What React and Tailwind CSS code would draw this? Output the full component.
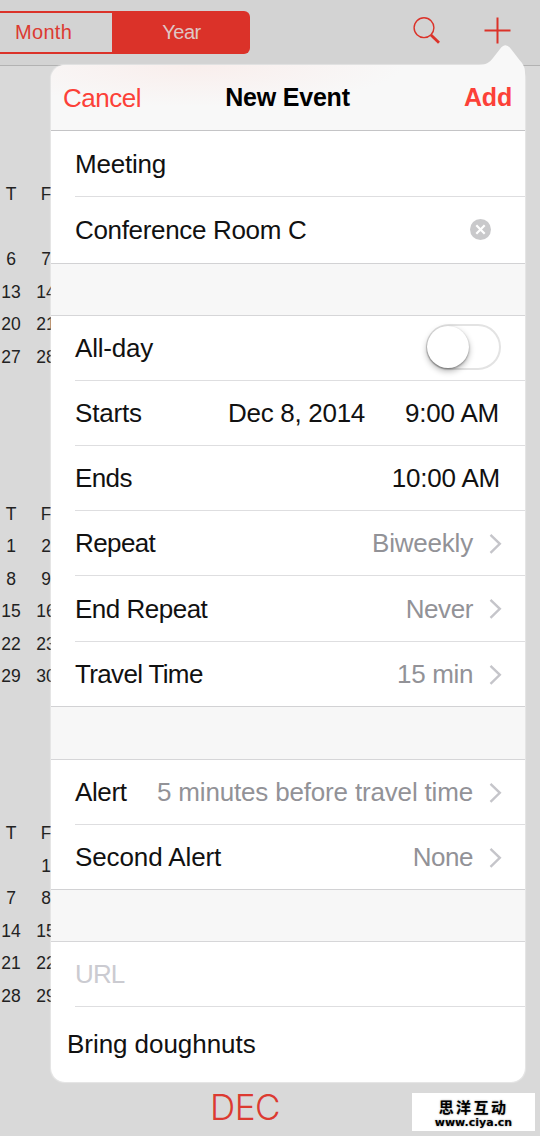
import React from "react";

const months = [
  ["T", "F", "", "", "6", "7", "13", "14", "20", "21", "27", "28"],
  ["T", "F", "1", "2", "8", "9", "15", "16", "22", "23", "29", "30"],
  ["T", "F", "", "1", "7", "8", "14", "15", "21", "22", "28", "29"],
];

const Chevron = () => (
  <svg width="13" height="22" viewBox="0 0 13 22" fill="none" className="ml-4 shrink-0">
    <path d="M1.5 1.8 L10.8 10.8 L1.5 19.8" stroke="#c5c5ca" strokeWidth="2.4" />
  </svg>
);

const Row = ({ label, height = "h-[65px]", tracking = "", last = false, children }) => (
  <div className={`bg-white pl-6 ${height} ${last ? "border-b border-[#d2d2d4]" : ""}`}>
    <div
      className={`flex h-full items-center justify-between pr-[23px] pt-px ${
        last ? "" : "border-b border-[#dedee0]"
      }`}
    >
      <span className={`whitespace-nowrap ${tracking}`}>{label}</span>
      {children}
    </div>
  </div>
);

const LinkValue = ({ children, tracking = "" }) => (
  <div className="flex items-center text-[#929297]">
    <span className={`whitespace-nowrap ${tracking}`}>{children}</span>
    <Chevron />
  </div>
);

const Gap = ({ height = "h-[52px]" }) => (
  <div className={`${height} border-b border-[#d6d6d8] bg-[#f7f7f7]`} />
);

const TopBar = () => (
  <header className="flex h-[66px] items-start justify-between border-b border-[#b2b2b2] bg-[#d3d3d3]">
    <div className="mt-[11px] flex h-[43px] w-[250px] overflow-hidden rounded-r-md border-2 border-l-0 border-[#db3229] bg-[#db3229] text-[20px] leading-[39px]">
      <div className="w-[112px] bg-[#d3d3d3] pl-[15px] tracking-[0.3px] text-[#dc3a31]">Month</div>
      <div className="flex-1 pl-[3px] text-center tracking-[-0.5px] text-[#dfc6c5]">Year</div>
    </div>
    <div className="mr-7 mt-[16px] flex gap-[43px]">
      <svg width="30" height="30" viewBox="0 0 30 30" fill="none" stroke="#db3229">
        <circle cx="13" cy="11.7" r="9.9" strokeWidth="1.4" />
        <path d="M20 19 L28 26.7" strokeWidth="2.8" />
      </svg>
      <svg width="28" height="30" viewBox="0 0 28 30" fill="none" stroke="#db3229">
        <path d="M0.5 14.5 H26.5 M13.5 1.5 V27.5" strokeWidth="2" />
      </svg>
    </div>
  </header>
);

const YearGrid = () => (
  <div className="-ml-[6.5px] w-[70px] pt-[112px]">
    {months.map((cells, i) => (
      <div key={i} className="h-[319.5px]">
        <div className="grid grid-cols-2 text-center text-[17.5px] leading-[32.6px] text-[#222]">
          {cells.map((c, j) => (
            <span key={j} className="h-[32.6px]">
              {c}
            </span>
          ))}
        </div>
      </div>
    ))}
  </div>
);

const EventPopover = () => (
  <div className="absolute left-[51px] top-[65px] w-[474px]">
    <svg
      width="50"
      height="36"
      viewBox="0 0 50 36"
      className="absolute -top-5 right-0"
      fill="#f8f8f8"
    >
      <path d="M4 20 C11 19.5 14 18 18 13 L25 4 Q30.5 -3.5 36 4 L44.5 15 C48 19 50 22 50 27 V36 H4 Z" />
    </svg>
    <div className="overflow-hidden rounded-[14px] text-[26px] tracking-[-0.2px] text-[#111] shadow-[0_0_1px_0.5px_rgba(255,255,255,0.35)]">
      <div className="grid h-[66px] grid-cols-[1fr_auto_1fr] items-center border-b border-[#c4c4c6] bg-[#f8f8f8] bg-[radial-gradient(ellipse_at_30%_0%,#f9eeec_0%,#f8f8f8_45%)] pl-3 pr-[13px] pt-px text-[#fc4138]">
        <span className="tracking-[-0.5px]">Cancel</span>
        <span className="text-[25px] font-bold text-black">New Event</span>
        <span className="text-right text-[25px] font-bold">Add</span>
      </div>

      <Row label="Meeting" height="h-[66px]" />
      <Row label="Conference Room C" tracking="tracking-[-0.33px]" height="h-[67px]" last>
        <svg width="21" height="21" viewBox="0 0 21 21" className="mb-0.5 mr-[11px]">
          <circle cx="10.5" cy="10.5" r="10.5" fill="#c9c9cb" />
          <path d="M6.3 6.3 L14.7 14.7 M14.7 6.3 L6.3 14.7" stroke="#fff" strokeWidth="2.2" />
        </svg>
      </Row>
      <Gap />

      <Row label="All-day">
        <div className="mb-[3px] mr-px h-[46px] w-[75px] rounded-full border-2 border-[#e3e3e3] bg-white">
          <div className="-ml-px h-[42px] w-[42px] rounded-full bg-white shadow-[0_3px_6px_rgba(0,0,0,0.3),0_1px_2px_rgba(0,0,0,0.35)]" />
        </div>
      </Row>
      <Row label="Starts">
        <div className="flex gap-10 whitespace-nowrap pr-[3px]">
          <span className="tracking-[-0.3px]">Dec 8, 2014</span>
          <span>9:00 AM</span>
        </div>
      </Row>
      <Row label="Ends" tracking="tracking-[-0.6px]">
        <span className="pr-0.5">10:00 AM</span>
      </Row>
      <Row label="Repeat" tracking="tracking-[-0.6px]">
        <LinkValue>Biweekly</LinkValue>
      </Row>
      <Row label="End Repeat" tracking="tracking-[-0.5px]" height="h-[66px]">
        <LinkValue tracking="tracking-[-0.4px]">Never</LinkValue>
      </Row>
      <Row label="Travel Time" tracking="tracking-[-0.65px]" last>
        <LinkValue tracking="tracking-[-0.35px]">15 min</LinkValue>
      </Row>
      <Gap height="h-[53px]" />

      <Row label="Alert" tracking="tracking-[-0.4px]">
        <LinkValue tracking="tracking-[-0.17px]">5 minutes before travel time</LinkValue>
      </Row>
      <Row label="Second Alert" tracking="tracking-[-0.1px]" last>
        <LinkValue tracking="tracking-[-0.45px]">None</LinkValue>
      </Row>
      <Gap />

      <Row label={<span className="text-[#cbcbd1]">URL</span>} tracking="tracking-[-0.9px]" />
      <div className="flex h-[75px] items-center bg-white pl-4 tracking-[-0.05px]">
        Bring doughnuts
      </div>
    </div>
  </div>
);

const Watermark = () => (
  <div className="absolute left-[412px] top-[1093px] flex h-[38px] w-[123px] flex-col items-center bg-white pt-[3px] text-black [text-shadow:0_0_2px_#999]">
    <span className="font-['Noto_Sans_CJK_SC',sans-serif] text-[15px] font-bold leading-[21px] tracking-[2.4px]">
      思洋互动
    </span>
    <span className="font-['DejaVu_Sans',sans-serif] text-[11px] font-bold leading-[11px]">
      www.ciya.cn
    </span>
  </div>
);

const App = () => {
  return (
    <div className="relative h-[1136px] w-[540px] overflow-hidden bg-[#d9d9d9] font-['Liberation_Sans',Arial,sans-serif]">
      <TopBar />
      <YearGrid />
      <EventPopover />
      <div className="absolute left-[210px] top-[1086px] font-['Inter',sans-serif] text-[35px] font-light leading-[42px] tracking-[-0.5px] text-[#dc3a31]">
        DEC
      </div>
      <Watermark />
    </div>
  );
};

export default App;
